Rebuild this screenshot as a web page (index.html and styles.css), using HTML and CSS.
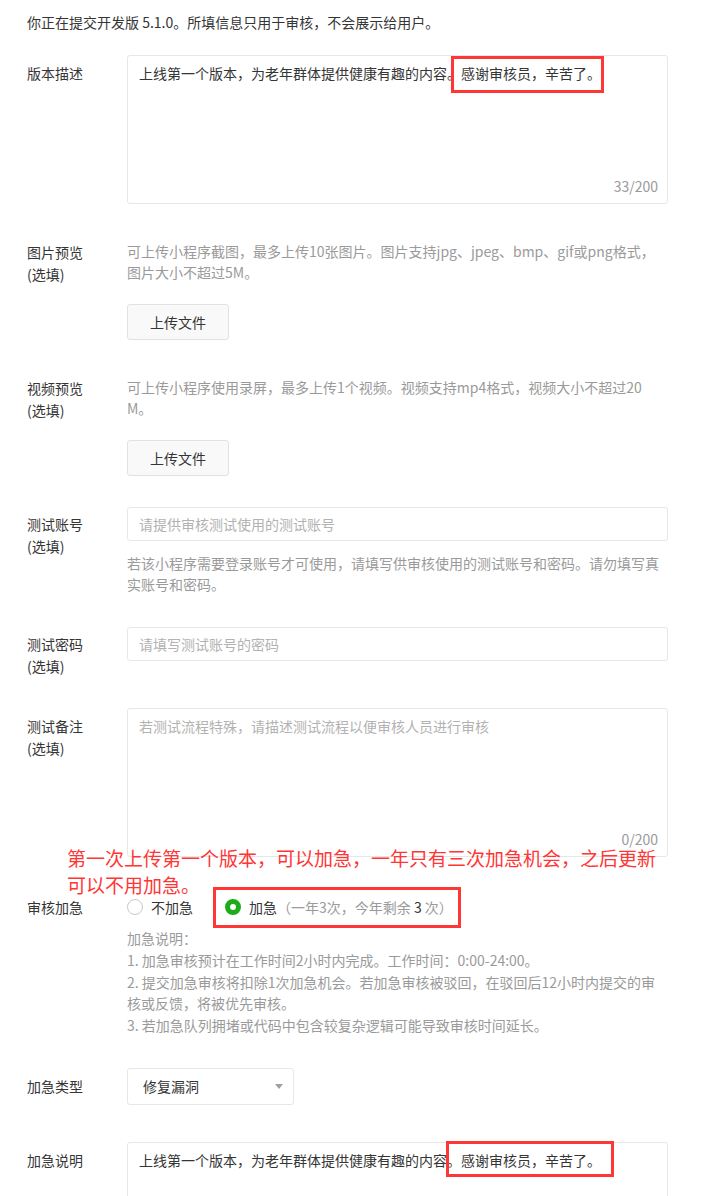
FILE: index.html
```html
<!DOCTYPE html>
<html lang="zh-CN">
  <head>
    <meta charset="UTF-8" />
    <meta name="viewport" content="width=device-width, initial-scale=1.0" />
    <title>提交审核</title>
    <link rel="stylesheet" href="styles.css">
  </head>
  <body>
    <div class="page">
      <p class="intro">你正在提交开发版 5.1.0。所填信息只用于审核，不会展示给用户。</p>

      <div class="row row-first">
        <div class="label label-box">版本描述</div>
        <div class="field">
          <div class="area">
            <div class="area-text">上线第一个版本，为老年群体提供健康有趣的内容。<span class="mark mark-desc">感谢审核员，辛苦了。</span></div>
            <div class="area-count">33/200</div>
          </div>
        </div>
      </div>

      <div class="row row-pic">
        <div class="label">图片预览<br />(选填)</div>
        <div class="field">
          <p class="help">可上传小程序截图，最多上传10张图片。图片支持jpg、jpeg、bmp、gif或png格式，图片大小不超过5M。</p>
          <button class="btn">上传文件</button>
        </div>
      </div>

      <div class="row row-video">
        <div class="label">视频预览<br />(选填)</div>
        <div class="field">
          <p class="help">可上传小程序使用录屏，最多上传1个视频。视频支持mp4格式，视频大小不超过20M。</p>
          <button class="btn">上传文件</button>
        </div>
      </div>

      <div class="row row-account">
        <div class="label label-box">测试账号<br />(选填)</div>
        <div class="field">
          <div class="input placeholder">请提供审核测试使用的测试账号</div>
          <p class="help help-below">若该小程序需要登录账号才可使用，请填写供审核使用的测试账号和密码。请勿填写真实账号和密码。</p>
        </div>
      </div>

      <div class="row row-password">
        <div class="label label-box">测试密码<br />(选填)</div>
        <div class="field">
          <div class="input placeholder">请填写测试账号的密码</div>
        </div>
      </div>

      <div class="row row-remark">
        <div class="label label-box">测试备注<br />(选填)</div>
        <div class="field">
          <div class="area">
            <div class="area-text placeholder">若测试流程特殊，请描述测试流程以便审核人员进行审核</div>
            <div class="area-count">0/200</div>
          </div>
        </div>
      </div>

      <div class="row row-urgent">
        <div class="red-note">第一次上传第一个版本，可以加急，一年只有三次加急机会，之后更新可以不用加急。</div>
        <div class="label">审核加急</div>
        <div class="field">
          <div class="radios">
            <span class="radio"><i class="dot"></i>不加急</span>
            <span class="radio radio-on mark mark-radio"><i class="dot"></i>加急<span class="muted">（一年3次，今年剩余</span>&nbsp;3&nbsp;<span class="muted">次）</span></span>
          </div>
          <div class="notes">
            <p>加急说明：</p>
            <p>1. 加急审核预计在工作时间2小时内完成。工作时间：0:00-24:00。</p>
            <p>2. 提交加急审核将扣除1次加急机会。若加急审核被驳回，在驳回后12小时内提交的审核或反馈，将被优先审核。</p>
            <p>3. 若加急队列拥堵或代码中包含较复杂逻辑可能导致审核时间延长。</p>
          </div>
        </div>
      </div>

      <div class="row row-type">
        <div class="label label-box">加急类型</div>
        <div class="field">
          <div class="select">
            <span>修复漏洞</span>
            <i class="caret"></i>
          </div>
        </div>
      </div>

      <div class="row row-reason">
        <div class="label label-box">加急说明</div>
        <div class="field">
          <div class="area">
            <div class="area-text">上线第一个版本，为老年群体提供健康有趣的内容。<span class="mark mark-reason">感谢审核员，辛苦了。</span></div>
          </div>
        </div>
      </div>
    </div>
  </body>
</html>
```

FILE: styles.css
```css
body {
  margin: 0;
  padding: 0;
  background: #fff;
  color: #353535;
  font-family: "Noto Sans CJK SC", "Microsoft YaHei", sans-serif;
  font-size: 14px;
}
p {
  margin: 0;
}
.page {
  padding: 0 27px;
}
.intro {
  margin-top: 11px;
  line-height: 22px;
  color: #353535;
}

/* form rows */
.row {
  display: flex;
  position: relative;
  margin-top: 31px;
}
.row-first {
  margin-top: 22px;
}
.row-pic {
  margin-top: 37px;
}
.row-video {
  margin-top: 37px;
}
.row-password {
  margin-top: 32px;
}
.row-urgent {
  margin-top: 39px;
}
.row-reason {
  margin-top: 37px;
}
.label {
  width: 100px;
  flex-shrink: 0;
  line-height: 22px;
  color: #353535;
}
.label-box {
  padding-top: 7px;
}
.row-account .label-box,
.row-password .label-box {
  padding-top: 6px;
}
.field {
  width: 541px;
}

/* text areas and inputs */
.area {
  box-sizing: border-box;
  height: 149px;
  padding: 6px 9px 6px 11px;
  border: 1px solid #e7e7e7;
  border-radius: 3px;
  display: flex;
  flex-direction: column;
  justify-content: space-between;
  line-height: 22px;
}
.area-count {
  text-align: right;
  color: #9a9a9a;
}
.input {
  box-sizing: border-box;
  height: 34px;
  line-height: 32px;
  padding: 0 11px;
  border: 1px solid #e7e7e7;
  border-radius: 3px;
}
.placeholder {
  color: #b2b2b2;
}
.help {
  color: #9a9a9a;
  line-height: 21px;
  padding-right: 5px;
  word-break: break-all;
}
.help-below {
  margin-top: 12px;
}
.btn {
  display: block;
  width: 102px;
  height: 36px;
  margin-top: 21px;
  padding: 0;
  background: #f9f9f9;
  border: 1px solid #e2e2e2;
  border-radius: 3px;
  color: #353535;
  font-family: inherit;
  font-size: 14px;
}

/* urgent review */
.radios {
  display: flex;
  align-items: center;
  height: 22px;
  gap: 32px;
}
.radio {
  display: inline-flex;
  align-items: center;
  line-height: 22px;
  color: #353535;
  white-space: nowrap;
}
.dot {
  display: inline-block;
  box-sizing: border-box;
  flex-shrink: 0;
  width: 16px;
  height: 16px;
  margin-right: 8px;
  border: 1px solid #c9c9c9;
  border-radius: 50%;
  background: #fff;
}
.radio-on .dot {
  border: 5px solid #1aad19;
}
.muted {
  color: #9a9a9a;
}
.notes {
  margin-top: 10px;
  color: #9a9a9a;
  line-height: 21.75px;
  padding-right: 5px;
  word-break: break-all;
}
.select {
  box-sizing: border-box;
  width: 167px;
  height: 37px;
  padding: 0 10px 0 15px;
  border: 1px solid #e7e7e7;
  border-radius: 3px;
  display: flex;
  align-items: center;
  justify-content: space-between;
}
.caret {
  width: 0;
  height: 0;
  border-left: 4px solid transparent;
  border-right: 4px solid transparent;
  border-top: 5px solid #a0a0a0;
}

/* red annotation overlays */
.mark {
  position: relative;
  display: inline-block;
  line-height: 22px;
}
.radio.mark {
  display: inline-flex;
}
.mark::after {
  content: "";
  position: absolute;
  border: 3px solid #ff3636;
  pointer-events: none;
}
.mark-desc::after {
  top: -6px;
  bottom: -9px;
  left: -10px;
  right: -3px;
}
.mark-reason::after {
  top: -8px;
  bottom: -6px;
  left: -15px;
  right: -13px;
}
.mark-radio::after {
  top: -9px;
  bottom: -10px;
  left: -12px;
  right: -8px;
}
.red-note {
  position: absolute;
  left: 40px;
  top: -52px;
  width: 600px;
  color: #ff3636;
  font-size: 19px;
  line-height: 27px;
}
```
